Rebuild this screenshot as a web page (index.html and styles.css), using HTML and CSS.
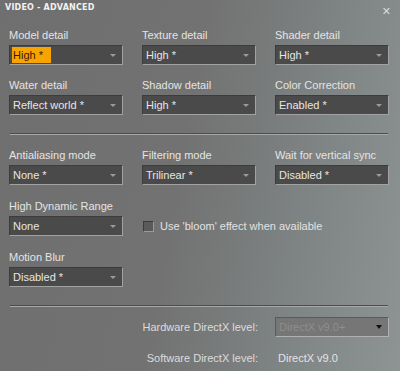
FILE: index.html
```html
<!DOCTYPE html>
<html lang="en">
<head>
    <meta charset="UTF-8">
    <title>Video - Advanced</title>
    <link rel="stylesheet" href="styles.css">
</head>
<body>
    <div class="dialog">
        <div class="header">
            <span class="title">VIDEO - ADVANCED</span>
            <span class="close">&#x2715;</span>
        </div>

        <div class="grid">
            <div class="field">
                <label>Model detail</label>
                <div class="select"><span class="value selected">High *</span><span class="arrow"></span></div>
            </div>
            <div class="field">
                <label>Texture detail</label>
                <div class="select"><span class="value">High *</span><span class="arrow"></span></div>
            </div>
            <div class="field">
                <label>Shader detail</label>
                <div class="select"><span class="value">High *</span><span class="arrow"></span></div>
            </div>
            <div class="field">
                <label>Water detail</label>
                <div class="select"><span class="value">Reflect world *</span><span class="arrow"></span></div>
            </div>
            <div class="field">
                <label>Shadow detail</label>
                <div class="select"><span class="value">High *</span><span class="arrow"></span></div>
            </div>
            <div class="field">
                <label>Color Correction</label>
                <div class="select"><span class="value">Enabled *</span><span class="arrow"></span></div>
            </div>
        </div>

        <div class="separator"></div>

        <div class="grid lower">
            <div class="field">
                <label>Antialiasing mode</label>
                <div class="select"><span class="value">None *</span><span class="arrow"></span></div>
            </div>
            <div class="field">
                <label>Filtering mode</label>
                <div class="select"><span class="value">Trilinear *</span><span class="arrow"></span></div>
            </div>
            <div class="field">
                <label>Wait for vertical sync</label>
                <div class="select"><span class="value">Disabled *</span><span class="arrow"></span></div>
            </div>
            <div class="field">
                <label>High Dynamic Range</label>
                <div class="select"><span class="value">None</span><span class="arrow"></span></div>
            </div>
            <div class="field check-field">
                <span class="checkbox"></span>
                <span class="check-label">Use 'bloom' effect when available</span>
            </div>
            <div class="field"></div>
            <div class="field">
                <label>Motion Blur</label>
                <div class="select"><span class="value">Disabled *</span><span class="arrow"></span></div>
            </div>
        </div>

        <div class="separator bottom-sep"></div>

        <div class="dx-row">
            <span class="dx-label">Hardware DirectX level:</span>
            <div class="select disabled"><span class="value">DirectX v9.0+</span><span class="arrow"></span></div>
        </div>
        <div class="dx-row sw">
            <span class="dx-label">Software DirectX level:</span>
            <span class="dx-value">DirectX v9.0</span>
        </div>
    </div>
</body>
</html>
```

FILE: styles.css
```css
html, body {
    margin: 0;
    padding: 0;
}
body {
    width: 400px;
    height: 371px;
    overflow: hidden;
    font-family: 'Liberation Sans', 'DejaVu Sans', sans-serif;
    font-size: 11px;
    color: #e2e2e2;
}
.dialog {
    width: 400px;
    height: 371px;
    box-sizing: border-box;
    background: linear-gradient(100deg, #6f6f6f 0%, #727272 45%, #7f8484 75%, #8e9394 100%);
}
.header {
    height: 29px;
    display: flex;
    justify-content: space-between;
    padding: 3px 9px 0 5px;
    box-sizing: border-box;
}
.title {
    font-family: 'DejaVu Sans', sans-serif;
    font-weight: bold;
    font-size: 8px;
    color: #f2f2f2;
    letter-spacing: 0.2px;
}
.close {
    font-size: 11px;
    font-weight: bold;
    color: #d8dcdc;
    margin-top: 2px;
}
.grid {
    display: grid;
    grid-template-columns: 114px 114px 114px;
    column-gap: 19px;
    row-gap: 14px;
    padding-left: 9px;
}
.grid.lower {
    row-gap: 15px;
}
.field {
    display: flex;
    flex-direction: column;
    height: 36px;
    box-sizing: border-box;
}
label {
    height: 16px;
    line-height: 13px;
    color: #e4e4e4;
}
.select {
    position: relative;
    height: 20px;
    box-sizing: border-box;
    background-color: #4a4a4a;
    border: 1px solid;
    border-color: #3c3c3c #a2a2a2 #a2a2a2 #3c3c3c;
    display: flex;
    align-items: center;
    padding-left: 2px;
    color: #e6e6e6;
}
.value {
    line-height: 16px;
    padding: 0 1px;
}
.value.selected {
    background-color: #f7a400;
    color: #3a1800;
    padding-right: 8px;
}
.arrow {
    position: absolute;
    right: 6px;
    top: 8px;
    width: 0;
    height: 0;
    border-left: 3px solid transparent;
    border-right: 3px solid transparent;
    border-top: 3px solid #9a9a9a;
}
.separator {
    margin: 18px 12px 14px 10px;
    height: 1px;
    background-color: #4c4c4c;
    border-bottom: 1px solid #a8a8a8;
}
.bottom-sep {
    margin-bottom: 10px;
}
.check-field {
    flex-direction: row;
    align-items: center;
    padding-top: 16px;
    white-space: nowrap;
}
.checkbox {
    flex-shrink: 0;
    width: 9px;
    height: 9px;
    border: 1px solid;
    border-color: #3c3c3c #9a9a9a #9a9a9a #3c3c3c;
    background-color: #5a5a5a;
    margin: 0 6px 0 1px;
}
.check-label {
    color: #e2e2e2;
}
.dx-row {
    display: flex;
    align-items: center;
    height: 20px;
}
.dx-label {
    width: 275px;
    text-align: right;
    padding-right: 17px;
    box-sizing: border-box;
    color: #dcdcdc;
}
.dx-row .select {
    width: 114px;
}
.select.disabled {
    background-color: #767676;
    border-color: #5a5a5a #b0b0b0 #b0b0b0 #5a5a5a;
    color: #8e8e8e;
}
.select.disabled .arrow {
    border-top-color: #111;
    border-top-width: 4px;
    top: 7px;
}
.dx-row.sw {
    margin-top: 11px;
}
.dx-value {
    padding-left: 3px;
    color: #e4e4e4;
}
```
